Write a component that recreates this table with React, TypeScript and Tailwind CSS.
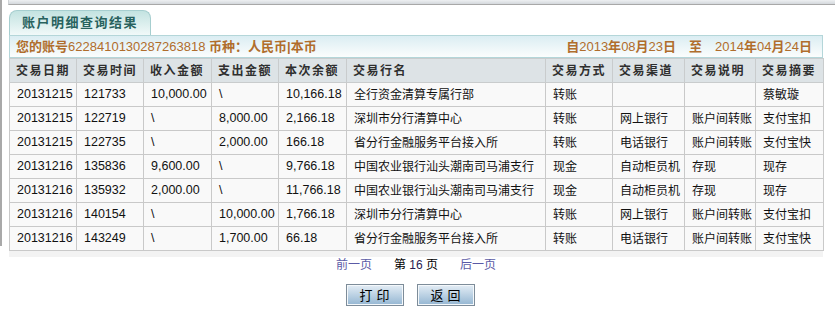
import React from "react";

const cols = [67, 67, 68, 67, 68, 199, 67, 72, 71, 68];

const heads = [
  "交易日期",
  "交易时间",
  "收入金额",
  "支出金额",
  "本次余额",
  "交易行名",
  "交易方式",
  "交易渠道",
  "交易说明",
  "交易摘要",
];

const rows = [
  ["20131215", "121733", "10,000.00", "\\", "10,166.18", "全行资金清算专属行部", "转账", "", "", "蔡敏璇"],
  ["20131215", "122719", "\\", "8,000.00", "2,166.18", "深圳市分行清算中心", "转账", "网上银行", "账户间转账", "支付宝扣"],
  ["20131215", "122735", "\\", "2,000.00", "166.18", "省分行金融服务平台接入所", "转账", "电话银行", "账户间转账", "支付宝快"],
  ["20131216", "135836", "9,600.00", "\\", "9,766.18", "中国农业银行汕头潮南司马浦支行", "现金", "自动柜员机", "存现", "现存"],
  ["20131216", "135932", "2,000.00", "\\", "11,766.18", "中国农业银行汕头潮南司马浦支行", "现金", "自动柜员机", "存现", "现存"],
  ["20131216", "140154", "\\", "10,000.00", "1,766.18", "深圳市分行清算中心", "转账", "网上银行", "账户间转账", "支付宝扣"],
  ["20131216", "143249", "\\", "1,700.00", "66.18", "省分行金融服务平台接入所", "转账", "电话银行", "账户间转账", "支付宝快"],
];

function PageButton({ label }: { label: string }) {
  return (
    <button className="w-[58px] h-[22px] border border-[#7d8c99] bg-gradient-to-b from-[#e4edf5] to-[#94b6d2] shadow-[inset_0_0_0_1px_#f4f8fb] text-[13px] text-black tracking-[4px] pl-[4px] leading-none">
      {label}
    </button>
  );
}

export default function App() {
  return (
    <div
      className="w-[835px] h-[335px] bg-white flex overflow-hidden"
      style={{ fontFamily: '"Liberation Sans", "Noto Sans CJK SC", sans-serif' }}
    >
      <div className="w-[2px] h-[246px] bg-[#a9a9a9] shrink-0" />
      <div className="ml-[6px] flex-1 flex flex-col">
        <div className="h-[5px] bg-gradient-to-b from-[#eef0f2] to-[#d4d8dc] border-b border-[#a8a8a8] border-l border-l-[#cfd3d6]" />

        <div className="ml-[1px] mt-[5px] w-[142px] h-[25px] rounded-t-[8px] border border-b-0 border-[#a6cecf] bg-gradient-to-b from-[#c3e3e1] to-[#f1f9f9] flex items-center justify-center">
          <span className="text-[13px] font-bold text-[#28625e] tracking-[1.5px]">账户明细查询结果</span>
        </div>

        <div className="ml-[1px] w-[814px]">
          <div className="h-[23px] border border-[#b4d6d9] bg-gradient-to-b from-[#dbedf2] to-[#fbfdfd] flex items-center justify-between pl-[6px] pr-[10px] text-[13px] text-[#b06d2c] font-bold">
            <span>
              您的账号<span className="font-normal">6228410130287263818</span> 币种：人民币|本币
            </span>
            <span>
              自<span className="font-normal">2013</span>年<span className="font-normal">08</span>月<span className="font-normal">23</span>日　至　<span className="font-normal">2014</span>年<span className="font-normal">04</span>月<span className="font-normal">24</span>日
            </span>
          </div>

          <table className="w-[814px] table-fixed border-collapse text-[12px]">
            <colgroup>
              {cols.map((w, i) => (
                <col key={i} style={{ width: w }} />
              ))}
            </colgroup>
            <thead>
              <tr className="h-[24px] bg-[#dde3e6]">
                {heads.map((h) => (
                  <th
                    key={h}
                    className="border border-[#c9cccd] text-left pl-[6px] font-bold text-[#2f2f2f] tracking-[1.5px] whitespace-nowrap overflow-hidden"
                  >
                    {h}
                  </th>
                ))}
              </tr>
            </thead>
            <tbody>
              {rows.map((r, i) => (
                <tr key={i} className="h-[24px] bg-[#f9f9f9]">
                  {r.map((c, j) => (
                    <td
                      key={j}
                      className={
                        j < 5
                          ? "border border-[#c9c9c9] pl-[7px] text-[12.5px] text-[#111] whitespace-nowrap overflow-hidden"
                          : "border border-[#c9c9c9] pl-[7px] text-[#111] whitespace-nowrap overflow-hidden"
                      }
                    >
                      {c}
                    </td>
                  ))}
                </tr>
              ))}
            </tbody>
          </table>

          <div className="h-[6px] bg-[#f3f3f3]" />

          <div className="h-[14px] mt-[1px] flex justify-center items-center text-[12px]">
            <span className="text-[#5b5ba6]">前一页</span>
            <span className="ml-[22px] text-black">
              第 <span className="text-[#2a1a50]">16</span> 页
            </span>
            <span className="ml-[22px] text-[#5b5ba6]">后一页</span>
          </div>

          <div className="mt-[12px] flex justify-center gap-[13px] pr-[12px]">
            <PageButton label="打印" />
            <PageButton label="返回" />
          </div>
        </div>
      </div>
    </div>
  );
}
